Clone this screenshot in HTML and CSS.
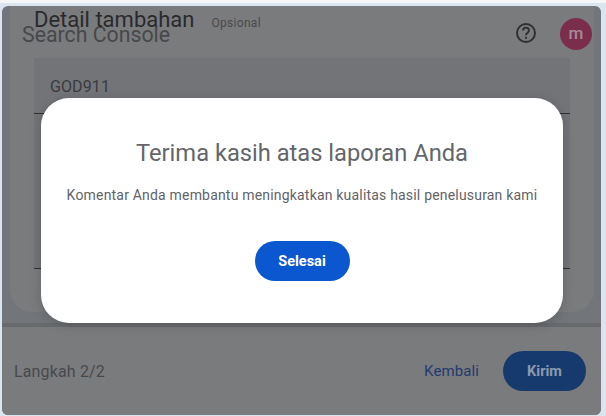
FILE: index.html
```html
<!DOCTYPE html>
<html lang="id">
<head>
  <meta charset="UTF-8">
  <meta name="viewport" content="width=device-width, initial-scale=1.0">
  <title>Search Console</title>
  <link rel="stylesheet" href="styles.css">
</head>
<body>
  <div class="topstrip"></div>
  <div class="panel">
    <main class="card">
      <header class="topbar">
        <span class="brand">Search Console</span>
        <div class="topbar-right">
          <svg class="help" width="24" height="24" viewBox="0 0 24 24" fill="none">
            <circle cx="12" cy="12" r="9" stroke="#2f3032" stroke-width="2"/>
            <path d="M9 9.6a3 3 0 0 1 6 0c0 2.1-3 2.2-3 4.6" stroke="#2f3032" stroke-width="1.9"/>
            <rect x="11" y="15.8" width="2" height="2" fill="#2f3032"/>
          </svg>
          <div class="avatar">m</div>
        </div>
      </header>
      <div class="detail-head">
        <h2>Detail tambahan</h2>
        <span class="optional">Opsional</span>
      </div>
      <div class="field">
        <div class="field-top">GOD911</div>
        <div class="field-low"></div>
      </div>
    </main>

    <footer class="footer">
      <span class="step">Langkah 2/2</span>
      <div class="footer-actions">
        <a class="back">Kembali</a>
        <button class="send">Kirim</button>
      </div>
    </footer>

    <div class="dialog">
      <h1>Terima kasih atas laporan Anda</h1>
      <p>Komentar Anda membantu meningkatkan kualitas hasil penelusuran kami</p>
      <button class="done">Selesai</button>
    </div>
  </div>
</body>
</html>
```

FILE: styles.css
```css
* { box-sizing: border-box; }
html, body { height: 100%; }
body { margin: 0; background: #dbe5ef; font-family: Roboto, sans-serif; overflow: hidden; }

.topstrip { height: 3px; background: #f4f6f8; }

.panel { position: relative; display: flex; flex-direction: column; width: 599px; height: 409px; margin: 3px 0 0 2px; background: #72757a; border-radius: 6px; overflow: hidden; }

.card { position: relative; flex: 1; margin: 0 7px 11px 8px; padding: 0 24px; background: #7a7b7d; border-radius: 0 0 22px 22px; }

.topbar { display: flex; align-items: flex-start; justify-content: space-between; height: 52px; margin: 0 -22px 0 -12px; padding-top: 12px; }
.brand { font-size: 21.3px; line-height: 26px; margin-top: 4px; color: #47484b; }
.topbar-right { display: flex; align-items: center; gap: 22px; }
.help { margin-bottom: 2px; }
.avatar { width: 32px; height: 32px; border-radius: 50%; background: #7a2e4c; color: #a98a96; font-size: 17px; font-weight: 500; text-align: center; line-height: 31px; }

.detail-head { position: absolute; left: 24px; top: 1px; display: flex; align-items: baseline; gap: 17px; }
.detail-head h2 { margin: 0; font-size: 22px; font-weight: 400; line-height: 26px; color: #2a2a2c; }
.optional { font-size: 12px; letter-spacing: .3px; color: #4a4a4c; }

.field { height: 211px; background: #737478; }
.field-top { height: 56px; padding: 19px 16px 0; font-size: 16px; letter-spacing: .1px; color: #3a3b3e; border-bottom: 1px solid #2f3032; }
.field-low { height: 155px; border-bottom: 1px solid #2f3032; }

.footer { display: flex; align-items: center; justify-content: space-between; height: 92px; padding: 0 15px 0 12px; background: #7a7b7d; border-top: 4px solid #686a6d; }
.step { font-size: 16px; letter-spacing: .15px; color: #48494c; }
.footer-actions { display: flex; align-items: center; gap: 24px; }
.back { font-size: 15px; letter-spacing: .1px; color: #1f3a70; }
.send { width: 83px; height: 40px; border: 0; border-radius: 20px; background: #173a6e; color: #8c99ad; font-family: Roboto, sans-serif; font-size: 14.5px; font-weight: 700; }

.dialog { position: absolute; left: 39px; top: 92px; width: 522px; height: 225px; background: #fff; border-radius: 28px; box-shadow: 0 2px 12px rgba(0,0,0,.18); text-align: center; padding-top: 39px; }
.dialog h1 { margin: 0; font-size: 23.7px; font-weight: 400; line-height: 32px; color: #63666a; }
.dialog p { margin: 16px 0 0; font-size: 14px; letter-spacing: .19px; line-height: 20px; color: #5f6368; }
.done { width: 95px; height: 40px; margin-top: 36px; border: 0; border-radius: 20px; background: #0b57d0; color: #fff; font-family: Roboto, sans-serif; font-size: 14.5px; font-weight: 700; }
```
